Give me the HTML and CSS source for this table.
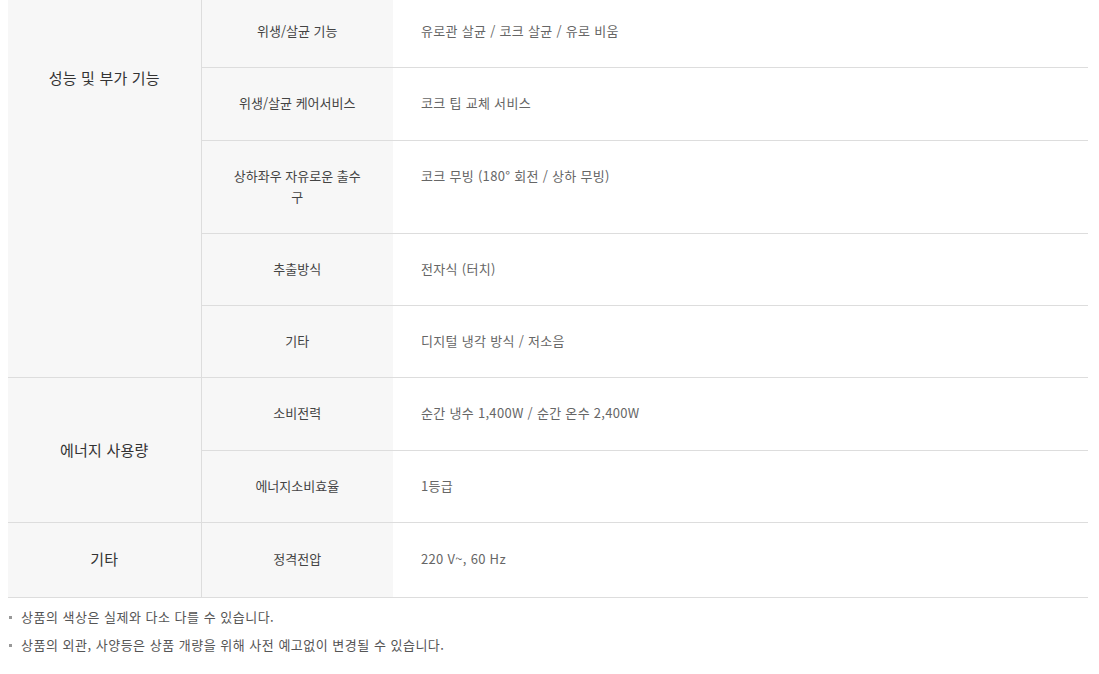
FILE: index.html
```html
<!DOCTYPE html>
<html lang="ko">
<head>
<meta charset="utf-8">
<title>제품 사양</title>
<link rel="stylesheet" href="styles.css">
</head>
<body>
<div class="spec">
  <table class="spec-table">
    <colgroup>
      <col class="c-group">
      <col class="c-label">
      <col>
    </colgroup>
    <tbody>
      <tr>
        <th class="group group-first" rowspan="5">성능 및 부가 기능</th>
        <th class="label">위생/살균 기능</th>
        <td class="value">유로관 살균 / 코크 살균 / 유로 비움</td>
      </tr>
      <tr>
        <th class="label">위생/살균 케어서비스</th>
        <td class="value">코크 팁 교체 서비스</td>
      </tr>
      <tr>
        <th class="label">상하좌우 자유로운 출수구</th>
        <td class="value">코크 무빙 (180° 회전 / 상하 무빙)</td>
      </tr>
      <tr>
        <th class="label">추출방식</th>
        <td class="value">전자식 (터치)</td>
      </tr>
      <tr>
        <th class="label">기타</th>
        <td class="value">디지털 냉각 방식 / 저소음</td>
      </tr>
      <tr>
        <th class="group" rowspan="2">에너지 사용량</th>
        <th class="label">소비전력</th>
        <td class="value">순간 냉수 1,400W / 순간 온수 2,400W</td>
      </tr>
      <tr>
        <th class="label">에너지소비효율</th>
        <td class="value">1등급</td>
      </tr>
      <tr class="last">
        <th class="group">기타</th>
        <th class="label">정격전압</th>
        <td class="value">220 V~, 60 Hz</td>
      </tr>
    </tbody>
  </table>
  <ul class="notes">
    <li>상품의 색상은 실제와 다소 다를 수 있습니다.</li>
    <li>상품의 외관, 사양등은 상품 개량을 위해 사전 예고없이 변경될 수 있습니다.</li>
  </ul>
</div>
</body>
</html>
```

FILE: styles.css
```css
html, body {
  margin: 0;
  padding: 0;
  background: #ffffff;
}

body {
  padding: 0 11px 0 8px;
  font-family: "Noto Sans CJK KR", "Noto Sans", sans-serif;
  color: #333333;
}

.spec {
  margin-top: -4px;
}

.spec-table {
  width: 100%;
  border-collapse: collapse;
  table-layout: fixed;
}

.c-group {
  width: 193px;
}

.c-label {
  width: 192px;
}

.spec-table th,
.spec-table td {
  border-bottom: 1px solid #dddddd;
  padding: 24px 28px 26.3px;
  line-height: 21px;
  font-weight: normal;
}

.group {
  background: #f7f7f7;
  border-right: 1px solid #dddddd;
  font-size: 15px;
  letter-spacing: 0.2px;
  color: #333333;
  text-align: center;
  vertical-align: middle;
  padding: 0 10px;
}

.group-first {
  vertical-align: top;
  padding-top: 71px !important;
}

.label {
  background: #f7f7f7;
  font-size: 13px;
  color: #444444;
  text-align: center;
  vertical-align: middle;
  padding-left: 25px;
  padding-right: 25px;
}

.value {
  font-size: 13px;
  letter-spacing: 0.3px;
  color: #666666;
  text-align: left;
  vertical-align: top;
  background: #ffffff;
}

.last .label,
.last .value {
  padding-top: 25px;
  padding-bottom: 28px;
}

.notes {
  list-style: none;
  margin: 5px 0 0;
  padding: 0;
}

.notes li {
  position: relative;
  padding-left: 13px;
  font-size: 13px;
  letter-spacing: 0.5px;
  line-height: 28px;
  color: #555555;
}

.notes li::before {
  content: "";
  position: absolute;
  left: 1px;
  top: 13px;
  width: 3px;
  height: 3px;
  background: #999999;
}
```
